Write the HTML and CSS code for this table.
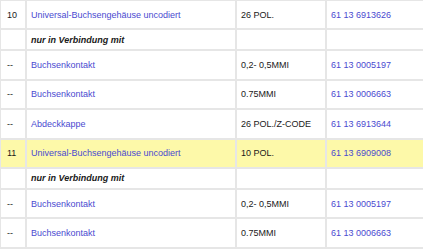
FILE: index.html
```html
<!DOCTYPE html>
<html>
<head>
<meta charset="utf-8">
<link rel="stylesheet" href="styles.css">
</head>
<body>
<table class="parts">
  <colgroup>
    <col class="c-pos"><col class="c-name"><col class="c-spec"><col class="c-num">
  </colgroup>
  <tr class="row">
    <td class="pos">10</td>
    <td><a class="link" href="#">Universal-Buchsengehäuse uncodiert</a></td>
    <td>26 POL.</td>
    <td><a class="link" href="#">61 13 6913626</a></td>
  </tr>
  <tr class="row note">
    <td></td>
    <td class="note-text">nur in Verbindung mit</td>
    <td></td>
    <td></td>
  </tr>
  <tr class="row">
    <td class="pos">--</td>
    <td><a class="link" href="#">Buchsenkontakt</a></td>
    <td>0,2- 0,5MMI</td>
    <td><a class="link" href="#">61 13 0005197</a></td>
  </tr>
  <tr class="row">
    <td class="pos">--</td>
    <td><a class="link" href="#">Buchsenkontakt</a></td>
    <td>0.75MMI</td>
    <td><a class="link" href="#">61 13 0006663</a></td>
  </tr>
  <tr class="row">
    <td class="pos">--</td>
    <td><a class="link" href="#">Abdeckkappe</a></td>
    <td>26 POL./Z-CODE</td>
    <td><a class="link" href="#">61 13 6913644</a></td>
  </tr>
  <tr class="row highlight">
    <td class="pos">11</td>
    <td><a class="link" href="#">Universal-Buchsengehäuse uncodiert</a></td>
    <td>10 POL.</td>
    <td><a class="link" href="#">61 13 6909008</a></td>
  </tr>
  <tr class="row note">
    <td></td>
    <td class="note-text">nur in Verbindung mit</td>
    <td></td>
    <td></td>
  </tr>
  <tr class="row">
    <td class="pos">--</td>
    <td><a class="link" href="#">Buchsenkontakt</a></td>
    <td>0,2- 0,5MMI</td>
    <td><a class="link" href="#">61 13 0005197</a></td>
  </tr>
  <tr class="row">
    <td class="pos">--</td>
    <td><a class="link" href="#">Buchsenkontakt</a></td>
    <td>0.75MMI</td>
    <td><a class="link" href="#">61 13 0006663</a></td>
  </tr>
</table>
</body>
</html>
```
FILE: styles.css
```css
html, body {
  margin: 0;
  padding: 0;
  background: #ffffff;
}
body {
  font-family: "Liberation Sans", Arial, sans-serif;
  font-size: 9px;
  color: #1a1a1a;
}
.parts {
  border-collapse: separate;
  border-spacing: 2px;
  background: #e6e6e6;
  width: 424px;
  margin: -1px 0 0 -1px;
  table-layout: fixed;
}
.c-pos { width: 24px; }
.c-name { width: 208px; }
.c-spec { width: 88px; }
.c-num { width: 96px; }
.parts td {
  background: #ffffff;
  height: 27.4px;
  box-sizing: border-box;
  padding: 0 4px;
  vertical-align: middle;
  white-space: nowrap;
}
.parts td.pos {
  padding-left: 6px;
}
.parts .note td {
  height: 19px;
}
.note-text {
  font-weight: bold;
  font-style: italic;
}
.parts .highlight td {
  background: #fdf9a9;
}
.link {
  color: #4a4ad0;
  text-decoration: none;
}
```
